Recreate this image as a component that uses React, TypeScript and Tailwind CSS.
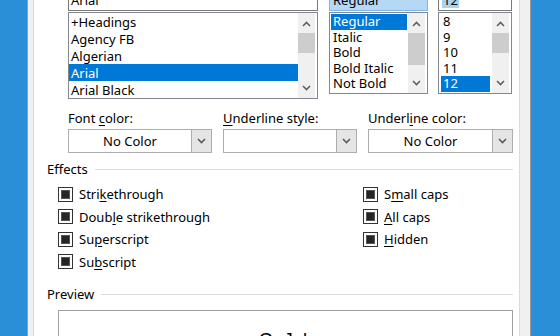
import React from "react";

const ui = "font-['Noto_Sans',sans-serif] text-[13px] leading-[16px] text-black";

function Chevron({ dir, className }: { dir: "up" | "down"; className?: string }) {
  return (
    <svg width="9" height="6" viewBox="0 0 9 6" className={className}>
      <path
        d={dir === "up" ? "M1 5L4.5 1.5L8 5" : "M1 1L4.5 4.5L8 1"}
        fill="none"
        stroke="currentColor"
        strokeWidth="1.6"
      />
    </svg>
  );
}

function ScrollBar({ thumb }: { thumb: string }) {
  return (
    <div className="mr-[2px] flex w-[17px] shrink-0 flex-col bg-[#f0f0f0]">
      <div className="flex h-[20px] items-center justify-center pt-[2px] text-[#606060]">
        <Chevron dir="up" />
      </div>
      <div className={`${thumb} bg-[#cdcdcd]`} />
      <div className="flex-1" />
      <div className="flex h-[20px] items-center justify-center text-[#606060]">
        <Chevron dir="down" />
      </div>
    </div>
  );
}

function ListBox({
  items,
  selected,
  box,
  row,
  pad,
  thumb,
}: {
  items: string[];
  selected: number;
  box: string;
  row: string;
  pad: string;
  thumb: string;
}) {
  return (
    <div className={`${box} mt-[1px] flex overflow-hidden border border-[#828790] bg-white`}>
      <div className={`${pad} flex min-w-0 flex-1 flex-col`}>
        {items.map((item, i) => (
          <div
            key={item}
            className={`${row} flex shrink-0 items-center whitespace-nowrap px-[2px] ${
              i === selected ? "bg-[#0078d7] text-white" : ""
            }`}
          >
            {item}
          </div>
        ))}
      </div>
      <ScrollBar thumb={thumb} />
    </div>
  );
}

function Dropdown({ value, className }: { value: string; className?: string }) {
  return (
    <div className={`${className ?? ""} flex h-[24px] border border-[#adadad] bg-white`}>
      <div className="flex flex-1 items-center justify-center">{value}</div>
      <div className="flex w-[20px] items-center justify-center border-l border-[#adadad] bg-[#e5e5e5] text-[#5a5a5a]">
        <Chevron dir="down" />
      </div>
    </div>
  );
}

function Check({ children }: { children: React.ReactNode }) {
  return (
    <div className="flex h-[22.5px] items-center">
      <div className="flex h-[15px] w-[15px] items-center justify-center border border-[#333] bg-white">
        <div className="h-[9px] w-[9px] border border-[#555] bg-[#262626]" />
      </div>
      <span className="ml-[6px] whitespace-nowrap">{children}</span>
    </div>
  );
}

function GroupTitle({ title, className }: { title: string; className?: string }) {
  return (
    <div className={`${className ?? ""} ml-[13px] flex h-[16px] items-center`}>
      <span>{title}</span>
      <div className="ml-[7px] h-px flex-1 bg-[#dcdcdc]" />
    </div>
  );
}

export default function App() {
  return (
    <div className={`${ui} flex h-[336px] w-[560px] overflow-hidden bg-[#2a8fd7]`}>
      <div className="w-[27px] shrink-0" />
      <div className="flex w-[504px] shrink-0 border-x border-[#9a9a9a] bg-[#f0f0f0] pl-[5px] pr-[10px]">
        <div className="flex min-w-0 flex-1 flex-col border-x border-[#dadada] bg-white pr-[6px]">
          {/* font / style / size */}
          <div className="-mt-[11px] ml-[34px] flex items-start">
            <div className="flex w-[250px] flex-col">
              <div className="flex h-[22px] items-center border border-[#7a7a7a] bg-white px-[2px]">Arial</div>
              <ListBox
                items={["+Headings", "Agency FB", "Algerian", "Arial", "Arial Black"]}
                selected={3}
                box="h-[87px]"
                row="h-[17px]"
                pad="px-[0px]"
                thumb="h-[20px]"
              />
            </div>
            <div className="ml-[11px] flex w-[99px] flex-col">
              <div className="flex h-[22px] items-center border border-[#7eb4ea] bg-[#b5d8f4] px-[3px]">Regular</div>
              <ListBox
                items={["Regular", "Italic", "Bold", "Bold Italic", "Not Bold"]}
                selected={0}
                box="h-[82px]"
                row="h-[15.5px] leading-[15px]"
                pad="px-[1px] pt-[1px]"
                thumb="h-[32px]"
              />
            </div>
            <div className="ml-[10px] flex w-[74px] flex-col">
              <div className="flex h-[22px] items-center border border-[#7a7a7a] bg-white px-[3px]">
                <span className="bg-[#a9d2f3] px-[1px]">12</span>
              </div>
              <ListBox
                items={["8", "9", "10", "11", "12"]}
                selected={4}
                box="h-[82px]"
                row="h-[15.5px] leading-[15px]"
                pad="px-[2px] pt-[1px]"
                thumb="h-[20px]"
              />
            </div>
          </div>

          {/* colour / underline */}
          <div className="ml-[34px] mt-[11px] grid grid-cols-[144px_134px_145px] gap-x-[11px]">
            <div className="whitespace-nowrap">
              Font <span className="underline underline-offset-2">c</span>olor:
            </div>
            <div className="whitespace-nowrap">
              <span className="underline underline-offset-2">U</span>nderline style:
            </div>
            <div className="whitespace-nowrap">
              Underl<span className="underline underline-offset-2">i</span>ne color:
            </div>
            <Dropdown value="No Color" className="mt-[3px]" />
            <Dropdown value="" className="mt-[3px]" />
            <Dropdown value="No Color" className="mt-[3px]" />
          </div>

          {/* effects */}
          <GroupTitle title="Effects" className="mt-[8px]" />
          <div className="ml-[24px] mt-[6px] grid grid-cols-[305px_1fr]">
            <div className="flex flex-col">
              <Check>
                Stri<span className="underline underline-offset-2">k</span>ethrough
              </Check>
              <Check>
                Doub<span className="underline underline-offset-2">l</span>e strikethrough
              </Check>
              <Check>
                Su<span className="underline underline-offset-2">p</span>erscript
              </Check>
              <Check>
                Su<span className="underline underline-offset-2">b</span>script
              </Check>
            </div>
            <div className="flex flex-col">
              <Check>
                S<span className="underline underline-offset-2">m</span>all caps
              </Check>
              <Check>
                <span className="underline underline-offset-2">A</span>ll caps
              </Check>
              <Check>
                <span className="underline underline-offset-2">H</span>idden
              </Check>
            </div>
          </div>

          {/* preview */}
          <GroupTitle title="Preview" className="mt-[13px]" />
          <div className="ml-[24px] mt-[8px] flex h-[60px] justify-center border border-[#a0a0a0] bg-white pt-[15px]">
            <span className="font-['Liberation_Sans',Arial,sans-serif] text-[18.5px] leading-normal">GoJek</span>
          </div>
        </div>
      </div>
      <div className="w-[29px] shrink-0" />
    </div>
  );
}
